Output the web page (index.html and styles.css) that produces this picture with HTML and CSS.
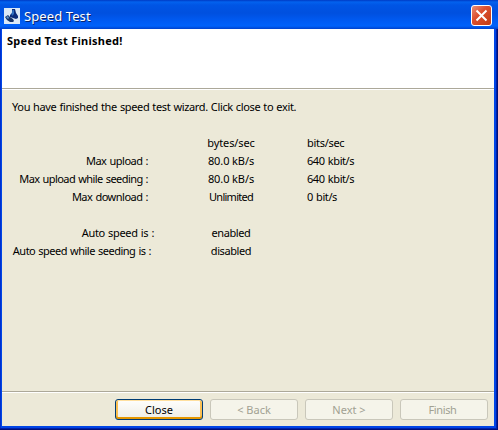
FILE: index.html
```
<!DOCTYPE html>
<html lang="en">
<head>
<meta charset="utf-8">
<title>Speed Test</title>
<link rel="stylesheet" href="styles.css">
</head>
<body>
<div class="window">
  <header class="titlebar">
    <svg class="app-icon" width="16" height="16" viewBox="0 0 16 16">
      <rect width="16" height="16" fill="#dce9f7"/>
      <path d="M8 1H11L12 5 14 8 14 10 12 11 9 10 6 9 6 7 8 5Z" fill="#0b2c7c"/>
      <path d="M8.500 2H10L10 6 8 8 7.500 6Z" fill="#2f6fc0"/>
      <path d="M1 9 4 7 6 9 9 11 10 13 9 14 6 14 3 12Z" fill="#163369"/>
      <path d="M2 9 4 8 5 10 4 11Z" fill="#5d93c8"/>
    </svg>
    <span class="title">Speed Test</span>
    <button class="x-button" aria-label="Close window">
      <svg width="13" height="13" viewBox="0 0 13 13"><path d="M1.500 1.500 11.500 11.500M11.500 1.500 1.500 11.500" stroke="#fff" stroke-width="2"/></svg>
    </button>
  </header>
  <section class="heading"><h1>Speed Test Finished!</h1></section>
  <main class="content">
    <p class="message">You have finished the speed test wizard. Click close to exit.</p>
    <div class="results">
      <span></span><span class="value">bytes/sec</span><span class="rate-head">bits/sec</span>
      <span class="label">Max upload :</span><span class="value">80.0 kB/s</span><span class="rate">640 kbit/s</span>
      <span class="label seeding">Max upload while seeding :</span><span class="value">80.0 kB/s</span><span class="rate">640 kbit/s</span>
      <span class="label">Max download :</span><span class="value unlimited">Unlimited</span><span class="rate">0 bit/s</span>
      <span class="spacer"></span>
      <span class="label auto">Auto speed is :</span><span class="value state">enabled</span><span></span>
      <span class="label auto-seeding">Auto speed while seeding is :</span><span class="value state">disabled</span><span></span>
    </div>
  </main>
  <footer class="actions">
    <button class="button primary">Close</button>
    <button class="button" disabled>&lt; Back</button>
    <button class="button" disabled>Next &gt;</button>
    <button class="button finish" disabled>Finish</button>
  </footer>
</div>
</body>
</html>
```
FILE: styles.css
```
* { box-sizing: border-box; }
body {
  margin: 0;
  font: 11px/18px "Noto Sans", sans-serif;
  color: #000;
  background: #001590;
}
.window {
  width: 498px;
  height: 430px;
  display: flex;
  flex-direction: column;
  padding: 0 4px 4px 2px;
  background: #0045e6;
  box-shadow: inset -1px -1px #001078, inset -2px -2px #0020aa, inset 1px 0 #0030ce;
}
.titlebar {
  height: 29px;
  flex: none;
  display: flex;
  align-items: center;
  margin: 0 -4px 0 -2px;
  padding: 2px 6px 0 4px;
  background: linear-gradient(#003ac4 0, #0362ee 2px, #0055e5 5px, #0050df 13px, #005cf5 22px, #0062fb 26px, #0041cc 29px);
}
.app-icon { flex: none; }
.title {
  margin-left: 4px;
  flex: 1;
  font-size: 13px;
  letter-spacing: 0.1px;
  color: #fff;
  text-shadow: 1px 1px #0a246a;
}
.x-button {
  width: 21px;
  height: 21px;
  padding: 0;
  display: flex;
  align-items: center;
  justify-content: center;
  border: 1px solid #fff;
  border-radius: 3px;
  background: linear-gradient(135deg, #e99078, #dc5030 40%, #c23b14);
}
.heading {
  height: 59px;
  flex: none;
  padding: 3px 5px;
  background: #fff;
}
h1 { margin: 0; font-size: 11px; line-height: 18px; letter-spacing: 0.27px; }
.content {
  height: 303px;
  flex: none;
  padding: 9px 10px;
  background: #ece9d8;
  border-top: 1px solid #aca899;
  box-shadow: inset 0 1px #fff;
}
.message { margin: 0 0 18px; white-space: nowrap; letter-spacing: -0.35px; word-spacing: 0.5px; }
.results {
  display: grid;
  grid-template-columns: 136px 159px 1fr;
  grid-auto-rows: 18px;
  white-space: nowrap;
}
.label { text-align: right; letter-spacing: -0.5px; word-spacing: 0.7px; }
.seeding { letter-spacing: -0.56px; }
.auto { margin-right: -6px; letter-spacing: -0.35px; }
.auto-seeding { margin-right: -3px; }
.value { padding-left: 7px; text-align: center; letter-spacing: -0.1px; }
.unlimited { letter-spacing: -0.75px; }
.state { letter-spacing: -0.4px; }
.rate { letter-spacing: -0.42px; word-spacing: 0.8px; }
.rate-head { letter-spacing: -0.3px; }
.spacer { grid-column: 1 / -1; }
.actions {
  flex: 1;
  display: flex;
  justify-content: flex-end;
  gap: 7px;
  padding: 7px 6px 0 0;
  background: #ece9d8;
  border-top: 1px solid #aca899;
  box-shadow: inset 0 1px #fff;
}
.button {
  width: 88px;
  height: 21px;
  padding: 0;
  font: inherit;
  line-height: 18px;
  color: #a1a192;
  background: #f5f4ea;
  border: 1px solid #c9c7ba;
  border-radius: 3px;
}
.finish { padding-right: 3px; letter-spacing: -0.4px; }
.primary {
  color: #000;
  border-color: #003c74;
  background: linear-gradient(#fefefd, #eeede5);
  box-shadow: inset 0 1px #ffe0a0, inset 0 -2px #e59700, inset 2px 0 #fabf52, inset -2px 0 #fabf52;
}
```
